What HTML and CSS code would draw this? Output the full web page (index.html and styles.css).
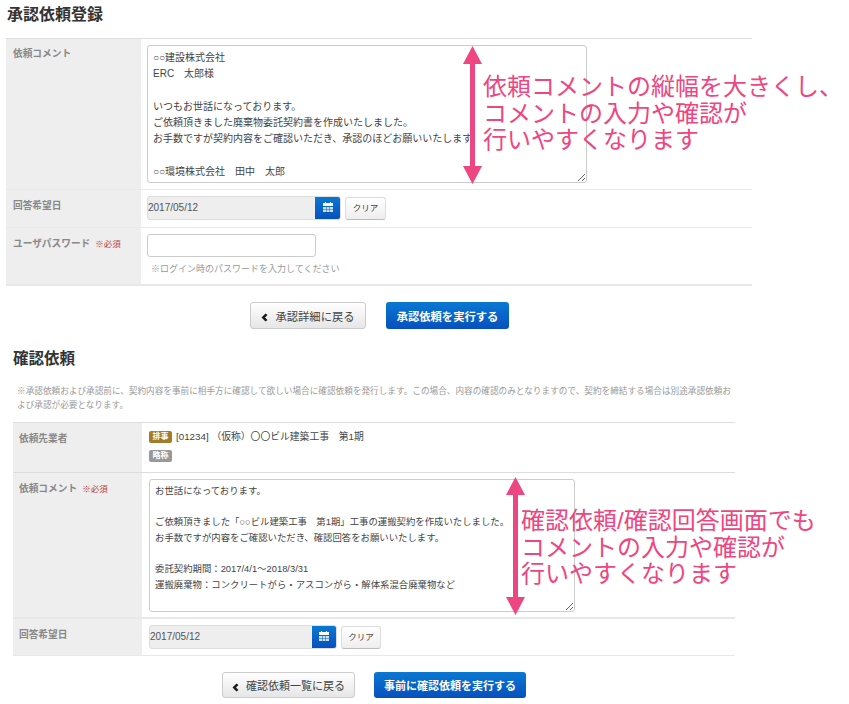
FILE: index.html
```html
<!DOCTYPE html>
<html lang="ja">
<head>
<meta charset="utf-8">
<title>承認依頼登録</title>
<link rel="stylesheet" href="styles.css">
</head>
<body>
<div class="page">
  <section class="sec sec-a">
    <h2 class="title">承認依頼登録</h2>
    <div class="form">
      <div class="row row-a1">
        <div class="label">依頼コメント</div>
        <div class="field"><textarea class="memo memo-a" spellcheck="false">○○建設株式会社
ERC　太郎様

いつもお世話になっております。
ご依頼頂きました廃棄物委託契約書を作成いたしました。
お手数ですが契約内容をご確認いただき、承認のほどお願いいたします。

○○環境株式会社　田中　太郎</textarea></div>
      </div>
      <div class="row row-a2">
        <div class="label label-low">回答希望日</div>
        <div class="field date-line">
          <div class="date date-a"><span class="date-val">2017/05/12</span><span class="cal"><svg width="10" height="10" viewBox="0 0 10 10"><path fill="#fff" d="M2 0h1v1h4V0h1v1h2v3H0V1h2z"/><path fill="#fff" fill-opacity=".8" d="M0 5h3v2H0zM3.500 5h3v2h-3zM7 5h3v2H7zM0 7.500h3V10H0zM3.500 7.500h3V10h-3zM7 7.500h3V10H7z"/></svg></span></div>
          <span class="clear">クリア</span>
        </div>
      </div>
      <div class="row row-a3">
        <div class="label label-low">ユーザパスワード<span class="req">※必須</span></div>
        <div class="field">
          <div class="pass"></div>
          <p class="hint">※ログイン時のパスワードを入力してください</p>
        </div>
      </div>
    </div>
    <div class="actions actions-a">
      <a class="btn back back-a"><svg class="chev" width="7" height="9" viewBox="0 0 7 9"><path d="M4.500 0.500 0.500 4.500l4 4 2-1.500L4 4.500 6.500 2z" fill="#1c1c1c"/></svg>承認詳細に戻る</a>
      <a class="btn go go-a">承認依頼を実行する</a>
    </div>
  </section>

  <section class="sec sec-b">
    <h2 class="title title-b">確認依頼</h2>
    <p class="note">※承認依頼および承認前に、契約内容を事前に相手方に確認して欲しい場合に確認依頼を発行します。この場合、内容の確認のみとなりますので、契約を締結する場合は別途承認依頼および承認が必要となります。</p>
    <div class="form">
      <div class="row row-b1">
        <div class="label label-b">依頼先業者</div>
        <div class="field field-b">
          <div class="party"><span class="tag tag-gold">排事</span>[01234] （仮称）〇〇ビル建築工事　第1期</div>
          <div class="party2"><span class="tag tag-gray">略称</span></div>
        </div>
      </div>
      <div class="row row-b2">
        <div class="label label-b">依頼コメント<span class="req">※必須</span></div>
        <div class="field field-b"><textarea class="memo memo-b" spellcheck="false">お世話になっております。

ご依頼頂きました「○○ビル建築工事　第1期」工事の運搬契約を作成いたしました。
お手数ですが内容をご確認いただき、確認回答をお願いいたします。

委託契約期間：2017/4/1～2018/3/31
運搬廃棄物：コンクリートがら・アスコンがら・解体系混合廃棄物など</textarea></div>
      </div>
      <div class="row row-b3">
        <div class="label label-b">回答希望日</div>
        <div class="field field-b date-line">
          <div class="date date-b"><span class="date-val">2017/05/12</span><span class="cal cal-b"><svg width="10" height="10" viewBox="0 0 10 10"><path fill="#fff" d="M2 0h1v1h4V0h1v1h2v3H0V1h2z"/><path fill="#fff" fill-opacity=".8" d="M0 5h3v2H0zM3.500 5h3v2h-3zM7 5h3v2H7zM0 7.500h3V10H0zM3.500 7.500h3V10h-3zM7 7.500h3V10H7z"/></svg></span></div>
          <span class="clear clear-b">クリア</span>
        </div>
      </div>
    </div>
    <div class="actions actions-b">
      <a class="btn back back-b"><svg class="chev" width="7" height="9" viewBox="0 0 7 9"><path d="M4.500 0.500 0.500 4.500l4 4 2-1.500L4 4.500 6.500 2z" fill="#1c1c1c"/></svg>確認依頼一覧に戻る</a>
      <a class="btn go go-b">事前に確認依頼を実行する</a>
    </div>
  </section>

  <svg class="arrow arrow-a" width="19" height="138" viewBox="0 0 19 138"><path fill="#ee4680" d="M9.500 0 19 18H12V120H19L9.500 138 0 120H7V18H0z"/></svg>
  <svg class="arrow arrow-b" width="19" height="138" viewBox="0 0 19 138"><path fill="#ee4680" d="M9.500 0 19 18H12V120H19L9.500 138 0 120H7V18H0z"/></svg>
  <div class="callout callout-a">依頼コメントの縦幅を大きくし、<br>コメントの入力や確認が<br>行いやすくなります</div>
  <div class="callout callout-b">確認依頼/確認回答画面でも<br>コメントの入力や確認が<br>行いやすくなります</div>
</div>
</body>
</html>
```
FILE: styles.css
```css
* { box-sizing: border-box; }
html, body { margin: 0; padding: 0; background: #fff; }
body { font-family: "Liberation Sans", "Noto Sans CJK JP", sans-serif; color: #333; overflow: hidden; }
.page { position: relative; width: 849px; height: 704px; overflow: hidden; }
.sec { display: flex; flex-direction: column; }
.sec-a { margin-left: 6px; width: 746px; padding-top: 4px; }
.sec-b { margin-left: 13px; width: 722px; margin-top: 19px; }
.title { margin: 0; font-size: 16px; line-height: 21px; font-weight: 700; color: #333; height: 34px; padding-left: 1px; }
.title-b { height: 36px; padding-left: 0; font-size: 15.500px; }
.note { margin: 0 0 8px; padding: 0 0 0 4px; font-size: 8.650px; line-height: 14px; color: #999; height: 30px; }
.form { border-top: 1px solid #ddd; }
.row { display: flex; border-bottom: 1px solid #e8e8e8; }
.row-a1 { height: 151px; }
.row-a2 { height: 38px; }
.row-a3 { height: 58px; border-bottom-width: 2px; }
.row-b1 { height: 50px; border-bottom-color: #ddd; }
.row-b2 { height: 146px; border-bottom-width: 2px; }
.row-b3 { height: 37px; }
.label { width: 135px; background: #eee; padding: 7px 0 0 7px; font-size: 9.700px; line-height: 16px; font-weight: 700; color: #888; flex: none; }
.label-low { padding-top: 8px; }
.label-b { width: 129px; padding: 8px 0 0 6px; }
.req { margin-left: 5px; font-size: 8.500px; font-weight: 400; color: #b9423f; }
.field { flex: 1; padding: 6px 0 0 6px; min-width: 0; }
.field-b { padding-left: 7px; }
.memo { display: block; margin: 0; padding: 4px 5px 0; border: 1px solid #ccc; border-radius: 3px; background: #fff; font-family: "Liberation Sans", "Noto Sans CJK JP", sans-serif; color: #444; resize: both; overflow: hidden; outline: 0; }
.memo-a { width: 440px; height: 138px; padding-left: 5px; font-size: 10px; line-height: 16.300px; }
.memo-b { width: 426px; height: 133px; padding-top: 3px; font-size: 9.400px; line-height: 15.600px; }
.date-line { display: flex; align-items: flex-start; gap: 4px; }
.date { display: flex; justify-content: space-between; height: 24px; background: #eee; border: 1px solid #ddd; border-radius: 3px; font-size: 10px; line-height: 21px; color: #555; overflow: hidden; }
.date-val { padding-left: 0; }
.date-a { width: 194px; }
.date-b { width: 188px; }
.cal { display: flex; align-items: center; justify-content: center; width: 25px; background: linear-gradient(#0a78d2, #0750bd); }
.cal svg { margin-top: -3px; }
.cal-b { width: 24px; }
.clear { display: block; width: 41px; height: 23px; margin-top: 1px; border: 1px solid #ddd; border-bottom-color: #bbb; border-radius: 3px; background: linear-gradient(#fff, #eee); font-size: 8.500px; line-height: 21px; text-align: center; color: #444; }
.clear-b { width: 40px; }
.pass { width: 169px; height: 23px; border: 1px solid #ccc; border-radius: 3px; background: #fff; }
.hint { margin: 5px 0 0 4px; font-size: 9px; line-height: 14px; color: #999; }
.actions { display: flex; }
.actions-a { padding: 16px 0 0 244px; gap: 20px; }
.actions-b { padding: 16px 0 0 209px; gap: 19px; }
.btn { display: flex; align-items: center; justify-content: center; border-radius: 3px; font-size: 11.300px; }
.back { border: 1px solid #ccc; background: linear-gradient(#fff, #e6e6e6); color: #444; }
.go { background: linear-gradient(#0a78d2, #0750bd); color: #fff; font-weight: 700; }
.chev { margin-right: 7px; margin-top: 4px; }
.back-a { width: 116px; height: 27px; }
.go-a { width: 123px; height: 27px; }
.back-b { width: 133px; height: 26px; font-size: 11px; }
.go-b { width: 152px; height: 26px; font-size: 11px; }
.party { display: flex; align-items: center; gap: 4px; font-size: 9.800px; line-height: 12px; color: #444; margin-top: 2px; }
.party2 { margin-top: 7px; line-height: 0; display: flex; }
.tag { display: block; width: 23px; height: 12px; border-radius: 2px; font-size: 8px; line-height: 12px; font-weight: 700; text-align: center; color: #fff; }
.tag-gold { background: #a57a28; }
.tag-gray { background: #999; }
.arrow { position: absolute; }
.arrow-a { left: 463px; top: 46px; }
.arrow-b { left: 506px; top: 477px; }
.callout { position: absolute; font-size: 24px; line-height: 26.500px; color: #ee4680; white-space: nowrap; }
.callout-a { left: 483px; top: 74px; }
.callout-b { left: 521px; top: 508px; }
```
